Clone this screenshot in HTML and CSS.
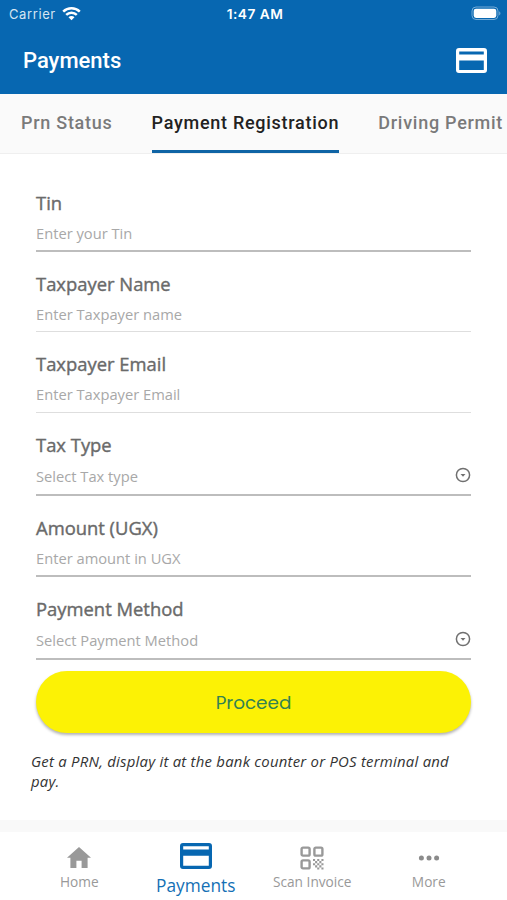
FILE: index.html
```html
<!DOCTYPE html>
<html lang="en">
<head>
  <meta charset="utf-8">
  <meta name="viewport" content="width=device-width, initial-scale=1">
  <title>Payments</title>
  <link rel="stylesheet" href="styles.css">
</head>
<body>
  <div class="app">
    <header class="header">
      <div class="status-bar">
        <div class="carrier">
          <span>Carrier</span>
          <svg width="19" height="15" viewBox="0 0 19 15" fill="none" stroke="#fff" stroke-width="2.5">
            <path d="M1.2 5.6a12 12 0 0 1 16.6 0"/>
            <path d="M4.2 8.9a7.6 7.6 0 0 1 10.6 0"/>
            <path d="M9.5 14.2L6.5 11.2a4.2 4.2 0 0 1 6 0z" fill="#fff" stroke="none"/>
          </svg>
        </div>
        <span class="time">1:47 AM</span>
        <svg class="battery" width="30" height="15" viewBox="0 0 30 15">
          <rect x="1" y="1" width="26" height="12.5" rx="4" fill="none" stroke="#74abd6" stroke-width="1"/>
          <rect x="2.7" y="2.7" width="22.6" height="9.2" rx="2.3" fill="#fff"/>
          <path d="M28.2 5.2c1.7.8 1.7 3.4 0 4.2z" fill="#74abd6"/>
        </svg>
      </div>
      <div class="title-bar">
        <h1>Payments</h1>
        <svg width="31" height="25" viewBox="0 0 31 25">
          <path fill="#fff" fill-rule="evenodd" d="M3 0h25a3 3 0 0 1 3 3v19a3 3 0 0 1-3 3H3a3 3 0 0 1-3-3V3a3 3 0 0 1 3-3zM3.2 3.6v2.9h24.6V3.6zM3.2 12.5V22h24.6v-9.5z"/>
        </svg>
      </div>
    </header>

    <nav class="tabs">
      <a class="tab">Prn Status</a>
      <a class="tab active">Payment Registration</a>
      <a class="tab">Driving Permit</a>
    </nav>

    <main class="content">
      <form class="form">
        <div class="field">
          <label for="tin">Tin</label>
          <input id="tin" type="text" placeholder="Enter your Tin">
        </div>
        <div class="field light short">
          <label for="name">Taxpayer Name</label>
          <input id="name" type="text" placeholder="Enter Taxpayer name">
        </div>
        <div class="field light">
          <label for="email">Taxpayer Email</label>
          <input id="email" type="text" placeholder="Enter Taxpayer Email">
        </div>
        <div class="field select">
          <label>Tax Type</label>
          <div class="select-box">
            <span>Select Tax type</span>
            <svg width="16" height="16" viewBox="0 0 16 16">
              <circle cx="8" cy="8" r="6.6" fill="none" stroke="#707070" stroke-width="1.5"/>
              <path d="M5.5 7h5L8 9.7z" fill="#707070"/>
            </svg>
          </div>
        </div>
        <div class="field">
          <label for="amount">Amount (UGX)</label>
          <input id="amount" type="text" placeholder="Enter amount in UGX">
        </div>
        <div class="field select">
          <label>Payment Method</label>
          <div class="select-box">
            <span>Select Payment Method</span>
            <svg width="16" height="16" viewBox="0 0 16 16">
              <circle cx="8" cy="8" r="6.6" fill="none" stroke="#707070" stroke-width="1.5"/>
              <path d="M5.5 7h5L8 9.7z" fill="#707070"/>
            </svg>
          </div>
        </div>
        <button class="proceed" type="button">Proceed</button>
      </form>
      <p class="hint">Get a PRN, display it at the bank counter or POS terminal and pay.</p>
    </main>

    <footer class="bottom-nav">
      <a class="nav-item home">
        <svg width="24" height="21" viewBox="0 0 24 21">
          <path fill="#999" d="M12 0l12 10.8h-3.4V21h-6v-7.2H9.4V21h-6V10.8H0z"/>
        </svg>
        <span>Home</span>
      </a>
      <a class="nav-item payments active">
        <svg width="32" height="26" viewBox="0 0 32 26">
          <path fill="#0767b1" fill-rule="evenodd" d="M3 0h26a3 3 0 0 1 3 3v20a3 3 0 0 1-3 3H3a3 3 0 0 1-3-3V3a3 3 0 0 1 3-3zM3.2 3.2v3.2h25.6V3.2zM3.2 12.8v10h25.6v-10z"/>
        </svg>
        <span>Payments</span>
      </a>
      <a class="nav-item scan">
        <svg width="24" height="24" viewBox="0 0 24 24">
          <g fill="none" stroke="#999" stroke-width="2.4">
            <rect x="1.6" y="1.6" width="8" height="8" rx="1.4"/>
            <rect x="14.4" y="1.6" width="8" height="8" rx="1.4"/>
            <rect x="1.6" y="14.4" width="8" height="8" rx="1.4"/>
          </g>
          <path fill="#999" d="M13 13h2.1v2.1H13zM17.2 13h2.1v2.1h-2.1zM15.1 15.1h2.1v2.1h-2.1zM19.3 15.1h2.1v2.1h-2.1zM13 17.2h2.1v2.1H13zM17.2 17.2h2.1v2.1h-2.1zM21.4 17.2h2.1v2.1h-2.1zM15.1 19.3h2.1v2.1h-2.1zM19.3 19.3h2.1v2.1h-2.1zM17.2 21.4h2.1v2.1h-2.1zM21.4 21.4h2.1v2.1h-2.1zM21.4 13h2.1v2.1h-2.1z"/>
        </svg>
        <span>Scan Invoice</span>
      </a>
      <a class="nav-item more">
        <svg width="22" height="6" viewBox="0 0 22 6" fill="#8b8b8b">
          <circle cx="3.4" cy="3" r="2.5"/>
          <circle cx="11" cy="3" r="2.5"/>
          <circle cx="18.6" cy="3" r="2.5"/>
        </svg>
        <span>More</span>
      </a>
    </footer>
  </div>
</body>
</html>
```
FILE: styles.css
```css
* {
  box-sizing: border-box;
}

body {
  margin: 0;
  font-family: "Open Sans", "Noto Sans", sans-serif;
  background-color: #fff;
}

.app {
  display: flex;
  flex-direction: column;
  width: 507px;
  height: 900px;
  overflow: hidden;
}

.header {
  height: 94px;
  background-color: #0767b1;
  color: #fff;
}

.status-bar {
  display: grid;
  grid-template-columns: 1fr auto 1fr;
  align-items: center;
  height: 27px;
  padding: 0 6px 0 9px;
  font-family: Inter, sans-serif;
  font-size: 13px;
}

.carrier {
  display: flex;
  align-items: center;
  gap: 6px;
  color: #d5e5f2;
  letter-spacing: 0.6px;
}

.time {
  font-size: 13.7px;
  font-weight: 600;
  letter-spacing: 0.5px;
}

.battery {
  justify-self: end;
}

.title-bar {
  display: flex;
  align-items: center;
  justify-content: space-between;
  height: 67px;
  padding: 0 20px 0 23px;
}

h1 {
  margin: 0;
  font-family: Roboto, sans-serif;
  font-size: 22px;
  font-weight: 500;
}

.tabs {
  display: flex;
  gap: 39px;
  height: 60px;
  padding-left: 21px;
  background-color: #fafafa;
  border-bottom: 1px solid #efefef;
  font-family: Roboto, sans-serif;
  font-size: 18px;
  font-weight: 500;
  white-space: nowrap;
}

.tab {
  flex: none;
  height: 59px;
  line-height: 58px;
  color: #7a7a7a;
  letter-spacing: 0.73px;
}

.tab.active {
  color: #222;
  border-bottom: 3px solid #0f64a5;
}

.content {
  flex: 1;
  padding: 37px 36px 0;
}

.form {
  display: flex;
  flex-direction: column;
  gap: 20px;
}

.field {
  display: flex;
  flex-direction: column;
  height: 61px;
  border-bottom: 2px solid #bdbdbd;
}

.field.light {
  border-bottom: 1px solid #dedede;
}

.field.short {
  height: 60px;
}

.field.select {
  height: 63px;
}

.field label {
  height: 24px;
  line-height: 23px;
  font-size: 18.4px;
  color: #6a6a6a;
  -webkit-text-stroke: 0.4px #6a6a6a;
}

.field input {
  height: 34px;
  padding: 2px 0 0;
  border: none;
  outline: none;
  background: none;
  font-family: inherit;
  font-size: 14.7px;
}

.field input::placeholder {
  color: #a8a8a8;
}

.select-box {
  display: flex;
  align-items: center;
  justify-content: space-between;
  height: 36px;
  padding-top: 2px;
  font-size: 14.7px;
  color: #a8a8a8;
}

.select-box svg {
  margin-bottom: 3px;
}

.proceed {
  height: 62px;
  margin-top: -9px;
  padding: 0;
  border: none;
  border-radius: 31px;
  background-color: #fcf205;
  box-shadow: 0 2px 3px rgba(0, 0, 0, 0.3);
  font-family: Poppins, Inter, sans-serif;
  font-size: 18.4px;
  color: #338252;
}

.hint {
  margin: 18px -5px 0;
  font-size: 14.9px;
  font-style: italic;
  line-height: 20px;
  letter-spacing: 0.24px;
  color: #333;
}

.bottom-nav {
  display: grid;
  grid-template-columns: repeat(4, 116.5px);
  height: 80px;
  padding-left: 21px;
  border-top: 12px solid #f9f9f9;
}

.nav-item {
  display: flex;
  flex-direction: column;
  align-items: center;
  font-size: 13.7px;
  line-height: 18px;
  white-space: nowrap;
  color: #999;
}

.nav-item.active {
  font-size: 17.3px;
  line-height: 24px;
  color: #1470b5;
}

.home svg {
  margin: 15px 0 5px;
}

.payments svg {
  margin: 11px 0 5px;
}

.scan svg {
  margin: 14px 0 3px;
}

.more svg {
  margin: 23px 0 12px;
}
```
